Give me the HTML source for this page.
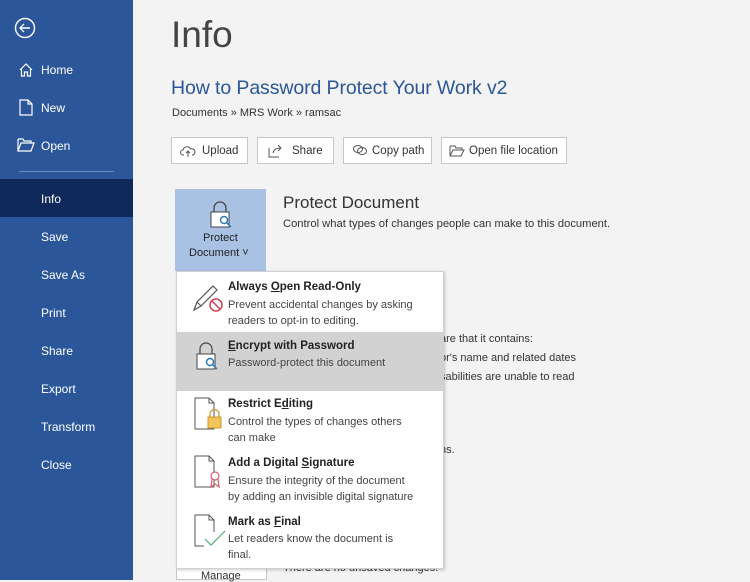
<!DOCTYPE html>
<html><head><style>
*{margin:0;padding:0;box-sizing:border-box}
body{width:750px;height:580px;overflow:hidden;background:#f3f3f3;font-family:"Liberation Sans",sans-serif;position:relative;color:#333}
.side{position:absolute;left:0;top:0;width:133px;height:580px;background:#2b579a;color:#fff}
.side .it{position:absolute;left:41px;font-size:12px}
.side svg{position:absolute}
.sel{position:absolute;left:0;top:179px;width:133px;height:38px;background:#0f2a5a}
.abs{position:absolute;white-space:nowrap}
.btn{position:absolute;top:137px;height:27px;border:1px solid #c6c6c6;background:#fff;font-size:11.5px;color:#333;padding:7px 0 0 0}
.menu{position:absolute;left:176px;top:271px;width:268px;height:298px;background:#fff;border:1px solid #d0d0d0;box-shadow:1px 1px 3px rgba(0,0,0,.2)}
.t{position:absolute;left:51px;font-size:11.5px;font-weight:bold;color:#222}
.d{position:absolute;left:51px;font-size:11px;color:#444;line-height:16px}
</style></head><body>
<div class="side">
<svg style="left:14px;top:17px" width="22" height="22" viewBox="0 0 22 22"><circle cx="11" cy="11" r="9.5" fill="none" stroke="#fff" stroke-width="1.4"/><path d="M16 11H6M10 7l-4 4 4 4" fill="none" stroke="#fff" stroke-width="1.4"/></svg>
<svg style="left:18px;top:62px" width="16" height="16" viewBox="0 0 16 16"><path d="M2 8L8 2l6 6M3.5 7v7h3v-4h3v4h3V7" fill="none" stroke="#fff" stroke-width="1.2"/></svg>
<div class="it" style="top:63px">Home</div>
<svg style="left:19px;top:99px" width="14" height="17" viewBox="0 0 14 17"><path d="M1 1h8l4 4v11H1z M9 1v4h4" fill="none" stroke="#fff" stroke-width="1.2"/></svg>
<div class="it" style="top:101px">New</div>
<svg style="left:17px;top:138px" width="18" height="14" viewBox="0 0 18 14"><path d="M1 1h5l1 2h7v2M1 1v12h13l3-8H4l-3 8" fill="none" stroke="#fff" stroke-width="1.2"/></svg>
<div class="it" style="top:139px">Open</div>
<div style="position:absolute;left:19px;top:171px;width:95px;height:1px;background:#6a8cc0"></div>
<div class="sel"></div>
<div class="it" style="top:192px">Info</div>
<div class="it" style="top:230px">Save</div>
<div class="it" style="top:268px">Save As</div>
<div class="it" style="top:306px">Print</div>
<div class="it" style="top:344px">Share</div>
<div class="it" style="top:382px">Export</div>
<div class="it" style="top:420px">Transform</div>
<div class="it" style="top:458px">Close</div>
</div>
<div class="abs" style="left:171px;top:14px;font-size:37px;color:#444">Info</div>
<div class="abs" style="left:171px;top:77px;font-size:19.5px;color:#2b579a;letter-spacing:-0.1px">How to Password Protect Your Work v2</div>
<div class="abs" style="left:172px;top:107px;font-size:11px;color:#333">Documents » MRS Work » ramsac</div>
<div class="btn" style="left:171px;width:77px;padding-left:30px">Upload</div>
<svg class="abs" style="left:180px;top:145px" width="16" height="13" viewBox="0 0 16 13"><path d="M4 10H3a2.5 2.5 0 010-5 4 4 0 017.5-1A3 3 0 0113 10h-1M8 12V6M6 8l2-2 2 2" fill="none" stroke="#555" stroke-width="1"/></svg>
<div class="btn" style="left:257px;width:77px;padding-left:34px">Share</div>
<svg class="abs" style="left:268px;top:143px" width="16" height="15" viewBox="0 0 16 15"><path d="M1 5v9h10M5 10c1-4 4-5 7-5M10 2l3 3-3 3" fill="none" stroke="#555" stroke-width="1"/></svg>
<div class="btn" style="left:343px;width:89px;padding-left:28px">Copy path</div>
<svg class="abs" style="left:352px;top:144px" width="16" height="12" viewBox="0 0 16 12"><ellipse cx="6" cy="5" rx="4.5" ry="3.5" fill="none" stroke="#555"/><ellipse cx="10" cy="7" rx="4.5" ry="3.5" fill="none" stroke="#555"/></svg>
<div class="btn" style="left:441px;width:126px;padding-left:27px">Open file location</div>
<svg class="abs" style="left:449px;top:145px" width="16" height="12" viewBox="0 0 16 12"><path d="M1 1h5l1 2h6v2M1 1v10h11l3-6H4l-3 6" fill="none" stroke="#555" stroke-width="1"/></svg>
<div class="abs" style="left:175px;top:189px;width:91px;height:82px;background:#a9c1e3"></div>
<svg class="abs" style="left:208px;top:200px" width="28" height="30" viewBox="0 0 28 30"><path d="M6 12V8a6 6 0 0112 0v4" fill="none" stroke="#444" stroke-width="1.3"/><rect x="3" y="12" width="18" height="15" fill="#fff" stroke="#444"/><circle cx="16" cy="20" r="3.5" fill="none" stroke="#2a7ab8" stroke-width="1.5"/><path d="M18 22l5 5" stroke="#2a7ab8" stroke-width="1.5"/></svg>
<div class="abs" style="left:203px;top:232px;font-size:11px;color:#222">Protect</div>
<div class="abs" style="left:189px;top:247px;font-size:11px;color:#222">Document ˅</div>
<div class="abs" style="left:283px;top:193px;font-size:17px;color:#333">Protect Document</div>
<div class="abs" style="left:283px;top:218px;font-size:11.2px;color:#333">Control what types of changes people can make to this document.</div>
<div class="abs" style="left:440px;top:330px;font-size:11px;color:#333;line-height:19px">are that it contains:<br>or's name and related dates<br>sabilities are unable to read</div>
<div class="abs" style="left:440px;top:444px;font-size:11px;color:#333">ns.</div>
<div class="abs" style="left:283px;top:562px;font-size:11px;color:#333">There are no unsaved changes.</div>
<div class="abs" style="left:176px;top:568px;width:91px;height:12px;background:#fff;border:1px solid #c6c6c6"></div>
<div class="abs" style="left:201px;top:570px;font-size:11px;color:#333">Manage</div>
<div class="menu">
<svg class="abs" style="left:14px;top:10px" width="36" height="32" viewBox="0 0 36 32"><path d="M3 28l3-8L22 4l4 4-16 16z M6 20l4 4" fill="none" stroke="#555" stroke-width="1.2"/><circle cx="25" cy="23" r="6" fill="none" stroke="#d04050" stroke-width="1.5"/><path d="M21 19l8 8" stroke="#d04050" stroke-width="1.5"/></svg>
<div class="t" style="top:9px">Always <u>O</u>pen Read-Only</div>
<div class="d" style="top:25px">Prevent accidental changes by asking<br>readers to opt-in to editing.</div>
<div class="abs" style="left:0;top:60px;width:266px;height:59px;background:#d2d2d2"></div>
<svg class="abs" style="left:17px;top:68px" width="30" height="32" viewBox="0 0 30 32"><path d="M6 14V9a6 6 0 0112 0v5" fill="none" stroke="#444" stroke-width="1.2"/><rect x="3" y="14" width="18" height="15" fill="#fff" stroke="#444"/><circle cx="16" cy="22" r="3.5" fill="none" stroke="#2a7ab8" stroke-width="1.5"/><path d="M18 24l5 5" stroke="#2a7ab8" stroke-width="1.5"/></svg>
<div class="t" style="top:68px"><u>E</u>ncrypt with Password</div>
<div class="d" style="top:83px">Password-protect this document</div>
<svg class="abs" style="left:17px;top:125px" width="34" height="36" viewBox="0 0 34 36"><path d="M1 1h14l5 5v26H1z M15 1v5h5" fill="none" stroke="#555"/><rect x="14" y="20" width="13" height="11" fill="#f2c45a" stroke="#c89a30"/><path d="M16 20v-3a4.5 4.5 0 019 0v3" fill="none" stroke="#c89a30" stroke-width="1.3"/></svg>
<div class="t" style="top:126px">Restrict E<u>d</u>iting</div>
<div class="d" style="top:142px">Control the types of changes others<br>can make</div>
<svg class="abs" style="left:17px;top:183px" width="34" height="36" viewBox="0 0 34 36"><path d="M1 1h14l5 5v26H1z M15 1v5h5" fill="none" stroke="#555"/><circle cx="21" cy="21" r="4" fill="#fff" stroke="#d06070" stroke-width="1.2"/><path d="M18 24l-1 8 4-3 4 3-1-8" fill="none" stroke="#d06070" stroke-width="1.2"/></svg>
<div class="t" style="top:185px">Add a Digital <u>S</u>ignature</div>
<div class="d" style="top:201px">Ensure the integrity of the document<br>by adding an invisible digital signature</div>
<svg class="abs" style="left:17px;top:242px" width="36" height="36" viewBox="0 0 36 36"><path d="M20 18V6l-5-5H1v31h9 M15 1v5h5" fill="none" stroke="#555"/><path d="M11 25l6 6 14-14" fill="none" stroke="#4caf70" stroke-width="1.2"/></svg>
<div class="t" style="top:244px">Mark as <u>F</u>inal</div>
<div class="d" style="top:259px">Let readers know the document is<br>final.</div>
</div>
</body></html>
